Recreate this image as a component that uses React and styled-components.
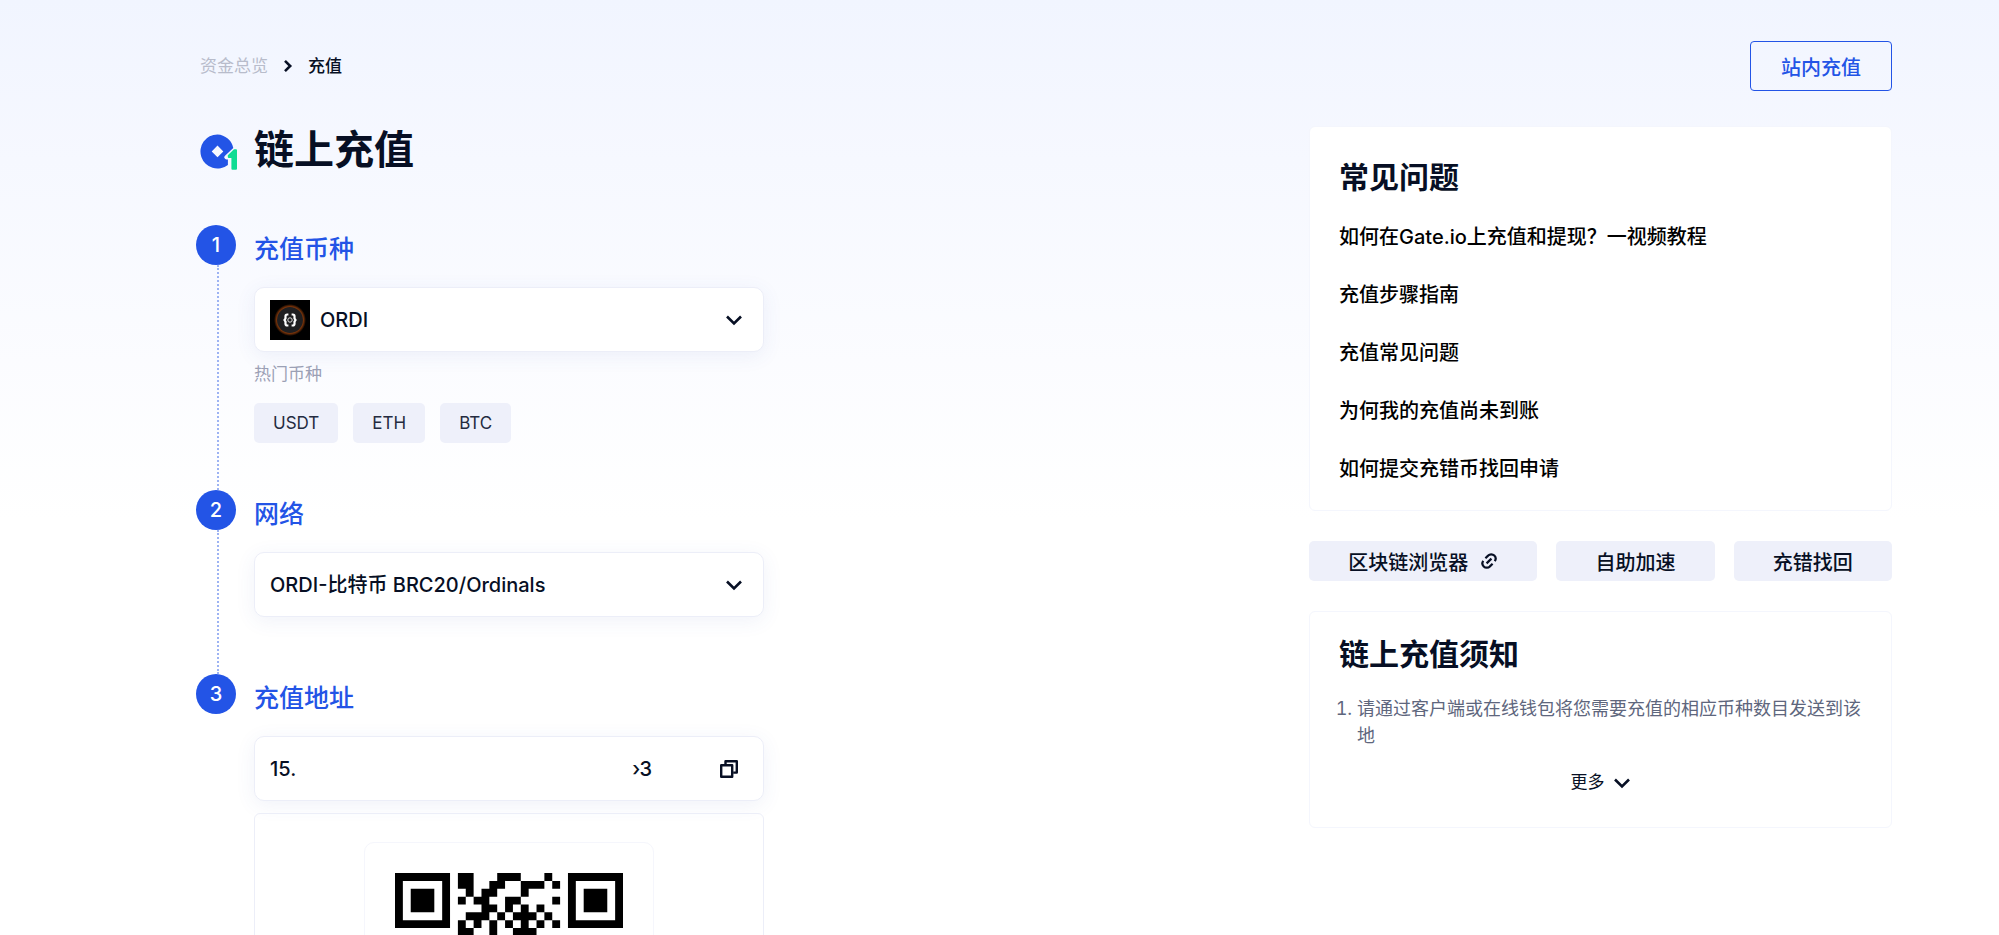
import React, { useState } from 'react';
import styled, { createGlobalStyle } from 'styled-components';

const GlobalStyle = createGlobalStyle`
  * {
    box-sizing: border-box;
  }

  body {
    margin: 0;
    font-family: Inter, 'Noto Sans CJK SC', sans-serif;
    color: #070f24;
    background: #fff;
  }

  h1, h2, h3, p, ol, ul {
    margin: 0;
    padding: 0;
    font-weight: 500;
  }

  a {
    color: inherit;
    text-decoration: none;
  }

  button, input, select {
    font: inherit;
    color: inherit;
  }
`;

const Page = styled.div`
  height: 100vh;
  overflow: hidden;
  padding: 41px 107px 0 196px;
  background: linear-gradient(180deg, #f1f5ff 0, #f6f8ff 160px, #fff 520px);
`;

const TopBar = styled.header`
  display: flex;
  align-items: center;
  justify-content: space-between;
  height: 50px;
`;

const Crumbs = styled.nav`
  display: flex;
  align-items: center;
  gap: 12px;
  padding-left: 4px;
  font-size: 17px;
  line-height: 26px;
  font-weight: 500;

  a {
    color: #b8bccb;
    font-weight: 400;
  }
`;

const OutlineButton = styled.button`
  height: 50px;
  padding: 0 30px;
  border: 1px solid #2354e6;
  border-radius: 4px;
  background: transparent;
  color: #2354e6;
  font-size: 20px;
  font-weight: 500;
`;

const Columns = styled.div`
  display: flex;
  justify-content: space-between;
  gap: 40px;
`;

const Main = styled.main`
  flex: 0 1 568px;
`;

const Title = styled.h1`
  display: flex;
  align-items: center;
  gap: 16px;
  height: 60px;
  margin: 29px 0 45px;
  padding-left: 4px;
  font-size: 40px;
  line-height: 60px;
  font-weight: 600;

  svg {
    margin-top: 4px;
  }
`;

const Step = styled.section`
  display: flex;
  gap: 18px;
`;

const Rail = styled.div`
  display: flex;
  flex-direction: column;
  align-items: center;
  flex: none;
  width: 40px;

  &::after {
    content: '';
    flex: 1;
    margin-left: 4px;
    border-left: ${({ $last }) => ($last ? 'none' : '2px dotted #9db3f3')};
  }
`;

const StepNumber = styled.span`
  width: 40px;
  height: 40px;
  border-radius: 50%;
  background: #2354e6;
  color: #fff;
  font-size: 20px;
  line-height: 40px;
  font-weight: 500;
  text-align: center;
`;

const StepBody = styled.div`
  flex: 1;
  min-width: 0;
  padding-bottom: ${({ $space }) => $space}px;
`;

const StepTitle = styled.h2`
  padding: 5px 0 19px;
  color: #2354e6;
  font-size: 25px;
  line-height: 38px;
`;

const Field = styled.div`
  display: flex;
  align-items: center;
  gap: 10px;
  height: 65px;
  padding: 0 20px 0 15px;
  border: 1px solid #eceef8;
  border-radius: 10px;
  background: #fff;
  box-shadow: 0 4px 20px rgba(70, 90, 180, 0.08);
  font-size: 20px;
  font-weight: 500;

  svg {
    flex: none;
  }
`;

const Select = styled.select`
  flex: 1;
  min-width: 0;
  padding: 0;
  border: 0;
  outline: 0;
  appearance: none;
  background: transparent;
`;

const Address = styled.p`
  display: flex;
  flex: 1;
  justify-content: space-between;
  padding-right: 53px;
`;

const IconButton = styled.button`
  display: flex;
  padding: 0 4px;
  border: 0;
  background: none;
`;

const Hint = styled.p`
  padding: 9px 0 15px;
  color: #9ba0b5;
  font-size: 17px;
  line-height: 27px;
  font-weight: 400;
`;

const Chips = styled.div`
  display: flex;
  gap: 15px;
`;

const Chip = styled.button`
  height: 40px;
  padding: 0 19px;
  border: 0;
  border-radius: 5px;
  background: #eef0fa;
  color: #242b40;
  font-size: 17px;
`;

const QrPanel = styled.div`
  display: flex;
  justify-content: center;
  margin-top: 12px;
  padding: 28px 0;
  border: 1px solid #eceef8;
  border-radius: 6px;
`;

const QrCard = styled.div`
  padding: 30px;
  border: 1px solid #f5f6fc;
  border-radius: 10px;

  svg {
    display: block;
  }
`;

const Side = styled.aside`
  display: flex;
  flex: 0 1 583px;
  flex-direction: column;
  gap: 30px;
  padding-top: 35px;
`;

const Card = styled.section`
  padding: ${({ $top }) => $top}px 29px ${({ $bottom }) => $bottom}px;
  border: 1px solid #f4f6fd;
  border-radius: 6px;
  background: #fff;
`;

const CardTitle = styled.h2`
  font-size: 30px;
  line-height: 44px;
  font-weight: 600;
`;

const LinkList = styled.ul`
  display: flex;
  flex-direction: column;
  gap: 28px;
  padding-top: 23px;
  color: #000;
  font-size: 20px;
  line-height: 30px;
  list-style: none;
`;

const Tools = styled.div`
  display: flex;
  gap: 19px;
`;

const ToolLink = styled.a`
  display: flex;
  flex: 1 1 auto;
  align-items: center;
  justify-content: center;
  gap: 12px;
  height: 40px;
  border-radius: 5px;
  background: #eef0fa;
  font-size: 20px;
  font-weight: 500;
`;

const Notes = styled.ol`
  padding: 19px 0 20px 18px;
  color: #5e667d;
  font-size: 18px;
  line-height: 27px;

  li {
    font-weight: 400;
  }
`;

const MoreButton = styled.button`
  display: flex;
  align-items: center;
  gap: 8px;
  margin: 0 auto;
  padding: 0;
  border: 0;
  background: none;
  font-size: 17px;
  line-height: 27px;
`;

const coins = ['ORDI', 'USDT', 'ETH', 'BTC'];

const faqs = [
  '如何在Gate.io上充值和提现？一视频教程',
  '充值步骤指南',
  '充值常见问题',
  '为何我的充值尚未到账',
  '如何提交充错币找回申请',
];

// Dark modules between the two finder patterns, row by row
const qrRows = [
  [8, 9, 13, 14, 15, 19],
  [8, 9, 12, 13, 16, 17, 18, 20],
  [9, 11, 12, 16],
  [8, 10, 11, 14, 15, 20],
  [11, 12, 14, 16, 18],
  [9, 10, 11, 13, 15, 16, 17, 19],
  [8, 10, 12, 14, 16, 18, 20],
  [8, 9, 12, 15, 16, 17],
];

function Chevron() {
  return (
    <svg width="18" height="18" viewBox="0 0 18 18" fill="none" aria-hidden="true">
      <path d="M2 5.5l7 7 7-7" stroke="#070f24" strokeWidth="2.6" />
    </svg>
  );
}

function CrumbArrow() {
  return (
    <svg width="16" height="16" viewBox="0 0 16 16" fill="none" aria-hidden="true">
      <path d="M5 2.8L10.2 8 5 13.2" stroke="#070f24" strokeWidth="2.6" />
    </svg>
  );
}

function Logo() {
  return (
    <svg width="38" height="38" viewBox="0 0 38 38" aria-hidden="true">
      <path
        fill="#2354e6"
        fillRule="evenodd"
        d="M17.5 1.5a17 17 0 1 0 10.4 30.4V26.5h-1.4a2.2 2.2 0 0 1-1.5-3.8l8.3-7.6A17 17 0 0 0 17.5 1.5zM17.5 12.6l5.8 5.8-5.8 5.8-5.8-5.8z"
      />
      <path
        fill="#0fdc93"
        d="M27.8 22.2l5.9-5.6a1 1 0 0 1 .7-.3H36a1 1 0 0 1 1 1v18.5a1 1 0 0 1-1 1h-3.6a1 1 0 0 1-1-1V25h-2.6a1 1 0 0 1-1-1z"
      />
    </svg>
  );
}

function OrdiIcon() {
  return (
    <svg width="40" height="40" viewBox="0 0 40 40" fill="none" aria-hidden="true">
      <defs>
        <radialGradient id="glow">
          <stop offset="0.78" stopColor="#a3450c" />
          <stop offset="1" stopColor="#000" />
        </radialGradient>
      </defs>
      <path fill="#000" d="M0 0h40v40H0z" />
      <circle cx="20" cy="20" r="16" fill="url(#glow)" />
      <circle cx="20" cy="20" r="13" fill="#1f1f21" />
      <path
        d="M18.4 14.5h-1.2q-1.7 0-1.7 1.7v2.2l-1 1.6 1 1.6v2.2q0 1.7 1.7 1.7h1.2M21.6 14.5h1.2q1.7 0 1.7 1.7v2.2l1 1.6-1 1.6v2.2q0 1.7-1.7 1.7h-1.2"
        stroke="#fff"
        strokeWidth="2.2"
      />
      <circle cx="20" cy="20" r="2.2" stroke="#ddd" strokeWidth="1" />
    </svg>
  );
}

function CopyIcon() {
  return (
    <svg width="20" height="20" viewBox="0 0 20 20" fill="none" aria-hidden="true">
      <g stroke="#070f24" strokeWidth="2.4" strokeLinejoin="round">
        <path d="M2.2 6.2h11v11.6h-11z" />
        <path d="M6.5 5.5V2.2h11.3v11.4h-3.6" />
      </g>
    </svg>
  );
}

function ChainIcon() {
  return (
    <svg width="18" height="18" viewBox="0 0 18 18" fill="none" aria-hidden="true">
      <g stroke="#070f24" strokeWidth="2.2">
        <path d="M5.4 6.2l2.7-2.6a4.3 4.3 0 0 1 6.2 0 4.3 4.3 0 0 1 .4 5.6" />
        <path d="M12.6 11.8l-2.7 2.6a4.3 4.3 0 0 1-6.2 0 4.3 4.3 0 0 1-.4-5.600" />
        <path d="M6.600 11.400l4.800-4.800" />
      </g>
    </svg>
  );
}

function QrCode() {
  return (
    <svg width="228" height="63" viewBox="0 0 29 8" role="img" aria-label="充值地址二维码">
      {[0, 22].map((x) => (
        <path key={x} fillRule="evenodd" d={`M${x} 0h7v7h-7zM${x + 1} 1v5h5v-5zM${x + 2} 2h3v3h-3z`} />
      ))}
      <path d={qrRows.map((cols, y) => cols.map((x) => `M${x} ${y}h1v1h-1z`).join('')).join('')} />
    </svg>
  );
}

export default function App() {
  const [coin, setCoin] = useState('ORDI');

  return (
    <>
      <GlobalStyle />
      <Page>
        <TopBar>
          <Crumbs>
            <a href="#funds">资金总览</a>
            <CrumbArrow />
            <span>充值</span>
          </Crumbs>
          <OutlineButton type="button">站内充值</OutlineButton>
        </TopBar>

        <Columns>
          <Main>
            <Title>
              <Logo />
              链上充值
            </Title>

            <Step>
              <Rail>
                <StepNumber>1</StepNumber>
              </Rail>
              <StepBody $space={47}>
                <StepTitle>充值币种</StepTitle>
                <Field>
                  <OrdiIcon />
                  <Select aria-label="充值币种" value={coin} onChange={(e) => setCoin(e.target.value)}>
                    {coins.map((name) => (
                      <option key={name}>{name}</option>
                    ))}
                  </Select>
                  <Chevron />
                </Field>
                <Hint>热门币种</Hint>
                <Chips>
                  {coins.slice(1).map((name) => (
                    <Chip key={name} type="button" onClick={() => setCoin(name)}>
                      {name}
                    </Chip>
                  ))}
                </Chips>
              </StepBody>
            </Step>

            <Step>
              <Rail>
                <StepNumber>2</StepNumber>
              </Rail>
              <StepBody $space={57}>
                <StepTitle>网络</StepTitle>
                <Field>
                  <Select aria-label="网络">
                    <option>ORDI-比特币 BRC20/Ordinals</option>
                  </Select>
                  <Chevron />
                </Field>
              </StepBody>
            </Step>

            <Step>
              <Rail $last>
                <StepNumber>3</StepNumber>
              </Rail>
              <StepBody $space={0}>
                <StepTitle>充值地址</StepTitle>
                <Field>
                  <Address>
                    <span>15.</span>
                    <span>›3</span>
                  </Address>
                  <IconButton type="button" aria-label="复制">
                    <CopyIcon />
                  </IconButton>
                </Field>
                <QrPanel>
                  <QrCard>
                    <QrCode />
                  </QrCard>
                </QrPanel>
              </StepBody>
            </Step>
          </Main>

          <Side>
            <Card $top={28} $bottom={26}>
              <CardTitle>常见问题</CardTitle>
              <LinkList>
                {faqs.map((text) => (
                  <li key={text}>
                    <a href="#faq">{text}</a>
                  </li>
                ))}
              </LinkList>
            </Card>

            <Tools>
              <ToolLink href="#explorer">
                区块链浏览器
                <ChainIcon />
              </ToolLink>
              <ToolLink href="#boost">自助加速</ToolLink>
              <ToolLink href="#recover">充错找回</ToolLink>
            </Tools>

            <Card $top={20} $bottom={31}>
              <CardTitle>链上充值须知</CardTitle>
              <Notes>
                <li>请通过客户端或在线钱包将您需要充值的相应币种数目发送到该地</li>
              </Notes>
              <MoreButton type="button">
                更多
                <Chevron />
              </MoreButton>
            </Card>
          </Side>
        </Columns>
      </Page>
    </>
  );
}
